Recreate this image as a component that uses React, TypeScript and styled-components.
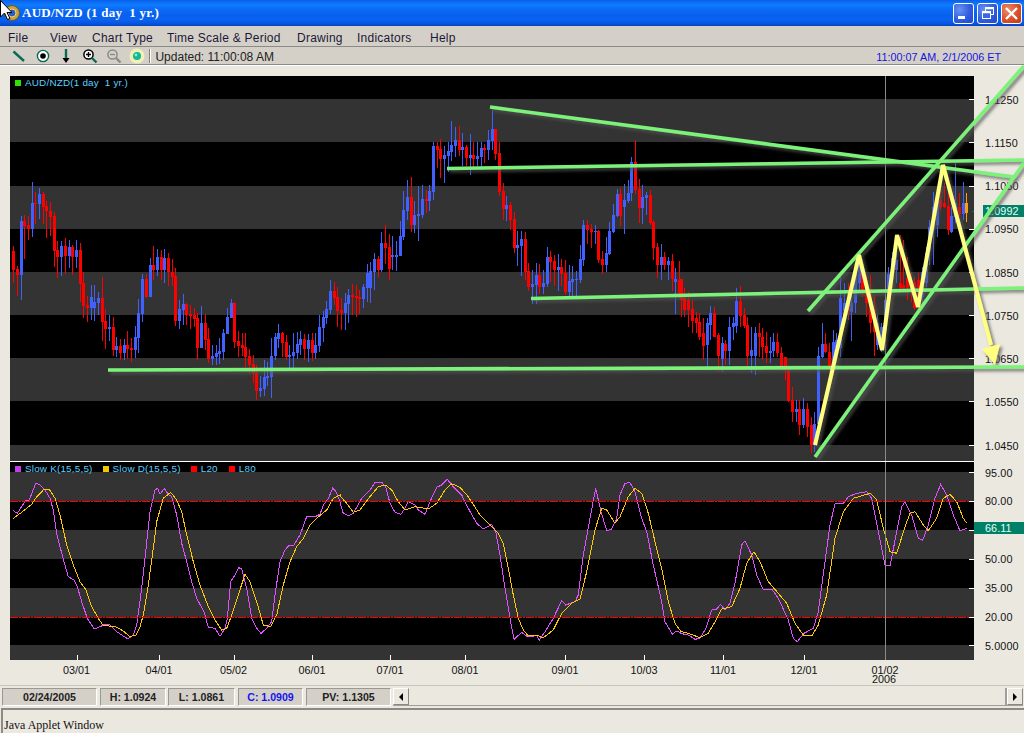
import React from 'react';
import styled, { createGlobalStyle } from 'styled-components';

const Global = createGlobalStyle`
  html, body { margin: 0; padding: 0; background: #fff; }
  #root { width: 1024px; }
`;

const Win = styled.div`
  position: relative;
  width: 1024px; height: 733px; overflow: hidden;
  display: flex; flex-direction: column;
  background: #ebe8e0;
  font-family: "Liberation Sans", Arial, sans-serif;
`;
const TitleBar = styled.div`
  height: 26px; flex: none; display: flex; align-items: center;
  padding: 0 2px 0 3px; box-sizing: border-box;
  background: linear-gradient(#0a5ee6 0, #0c6cf4 2px, #0f7cff 5px, #0a6cf6 9px, #0860ee 15px, #0a62f0 20px, #0652dc 24px, #0344c0 26px);
`;
const TitleText = styled.span`
  font: bold 13px "Liberation Serif", serif; color: #fff; margin-left: 1px;
  white-space: pre; letter-spacing: .25px;
`;
const WinButtons = styled.div`margin-left: auto; display: flex; gap: 3px;`;
const WinButton = styled.div<{ $close?: boolean }>`
  width: 21px; height: 21px; box-sizing: border-box; border: 1px solid #fff; border-radius: 3px;
  display: flex; align-items: center; justify-content: center;
  background: ${p => p.$close
    ? 'radial-gradient(circle at 30% 30%, #ee8a6a, #d8502a 55%, #c03a16)'
    : 'radial-gradient(circle at 30% 30%, #6a92f0, #2f5ce0 55%, #2048c8)'};
`;
const Cursor = styled.svg`position: absolute; left: 0; top: 0; width: 12px; height: 20px;`;
const MenuBar = styled.div`
  height: 21px; flex: none; box-sizing: border-box; display: flex; align-items: center;
  padding: 3px 0 0 8px; background: #d4d0c8; border-bottom: 1px solid #8a8a88;
`;
const MenuItem = styled.span<{ $w: number }>`
  width: ${p => p.$w}px; font-size: 12px; letter-spacing: .25px; color: #1c1838; white-space: nowrap;
`;
const ToolBar = styled.div`
  height: 18px; flex: none; box-sizing: border-box; display: flex; align-items: center;
  padding: 0 23px 0 11px; background: #d4d0c8; border-bottom: 1px solid #8a8a88;
`;
const Tools = styled.div`display: flex; gap: 7.7px; align-items: center;`;
const Separator = styled.div`
  width: 1px; height: 14px; margin: 0 4px 0 4px; background: #808080; border-right: 1px solid #fff;
`;
const Updated = styled.span`font-size: 12px; color: #222; padding-top: 2px;`;
const Clock = styled.span`margin-left: auto; font-size: 10.8px; color: #1414e0; padding-top: 2px;`;
const ChartRegion = styled.div`
  position: relative; flex: none; height: 620px; overflow: hidden; box-sizing: border-box;
  padding: 11px 0 0 10px; box-shadow: inset 0 1px #fff;
  display: grid; grid-template-columns: 964px 50px; grid-template-rows: 385px 1px 198px;
`;
const PlotSvg = styled.svg`display: block; background: #000; shape-rendering: crispEdges;`;
const Divider = styled.div`background: #fff; grid-column: 1;`;
const Overlay = styled.svg`position: absolute; left: 0; top: 0; pointer-events: none;`;
const XAxis = styled.svg`position: absolute; left: 0; bottom: 0; font: 10.8px "Liberation Sans", sans-serif; fill: #111;`;
const AxisCol = styled.div<{ $rowH: number; $pad: number }>`
  position: relative; display: flex; flex-direction: column; padding-top: ${p => p.$pad}px;
  & > span { height: ${p => p.$rowH}px; flex: none; display: flex; align-items: center; padding-left: 11px;
    font-size: 10.8px; letter-spacing: .1px; color: #111; line-height: 1; }
`;
const Sticker = styled.div<{ $top: number; $left: number }>`
  position: absolute; left: ${p => p.$left}px; right: 0; top: ${p => p.$top}px; height: 12px; background: #008066;
  color: #e6fff6; font-size: 10.8px; line-height: 12px; padding-left: ${p => 11 - p.$left}px; letter-spacing: .1px;
`;
const Legend = styled.div<{ $top: number }>`
  position: absolute; left: 15px; top: ${p => p.$top}px; display: flex; align-items: center; height: 9px;
  font-size: 9.9px; letter-spacing: .2px; color: #5ccfff; white-space: pre;
`;
const Swatch = styled.i<{ $c: string; $ml?: number }>`
  display: block; width: 6px; height: 6px; background: ${p => p.$c}; margin: 0 4px 0 ${p => p.$ml ?? 0}px;
`;
const StatusBar = styled.div`
  height: 22px; flex: none; box-sizing: border-box; border-top: 1px solid #c8c5bd;
  padding: 2px 1px 0 2px; display: flex; align-items: flex-start; background: #ebe8e0;
`;
const StatusBox = styled.div<{ $w: number; $ml?: number; $blue?: boolean }>`
  width: ${p => p.$w}px; margin-left: ${p => p.$ml ?? 0}px; height: 18px; box-sizing: border-box;
  background: #d4d0c8; border: 1px solid; border-color: #9a9890 #fff #fff #9a9890;
  display: flex; align-items: center; justify-content: center;
  font-size: 10.6px; font-weight: bold; color: ${p => p.$blue ? '#1414f0' : '#222'};
`;
const Scroll = styled.div`
  margin-left: 2px; flex: 1; height: 18px; display: flex; background: #ebe8e0;
  border-bottom: 1px solid #a09e96; box-sizing: border-box;
`;
const ScrollBtn = styled.div`
  width: 16px; height: 17px; box-sizing: border-box; background: #ebe8e0;
  border: 1px solid; border-color: #fff #8a8880 #8a8880 #fff;
  display: flex; align-items: center; justify-content: center;
`;
const ScrollTrack = styled.div`flex: 1; border-right: 2px solid #a09e96; box-sizing: border-box;`;
const Arrow = styled.i<{ $right?: boolean }>`
  display: block; width: 0; height: 0; border-style: solid;
  border-width: 4px ${p => p.$right ? 0 : '4px'} 4px ${p => p.$right ? '4px' : 0};
  border-color: transparent #000;
`;
const Footer = styled.div`
  flex: 1; margin-top: 1px; box-sizing: border-box; border-top: 2px solid #8c8a84; border-left: 2px solid #8c8a84;
  margin-left: 1px; padding: 8px 0 0 1px;
  font: 12px "Liberation Serif", serif; color: #111;
`;

const parse = (base: number, x0: number, x1: number, s: string) => {
  const rows = s.trim().split(/\s+/);
  return rows.map((r, i) => {
    const [a, b, c, d] = r.slice(1).split(',').map(n => base + Number(n) / 3);
    return { k: r[0], x: Math.round(x0 + (i * (x1 - x0)) / (rows.length - 1)), a, b, c, d };
  });
};

const candles = [
  ...parse(170, 13.3, 337.3, `R243,300,228,339 R297,315,288,378 B153,315,138,390 R153,168,135,267 R165,177,138,210 B99,177,36,201 R99,101,66,162 B72,102,54,147 R72,111,66,162 R108,123,93,204 R123,141,96,198 R138,243,126,291 R240,261,213,324 B228,261,213,318 R228,258,204,312 B231,258,210,294 R231,261,225,315 B240,261,210,294 R240,342,219,396 R339,408,306,444 R405,414,378,456 B381,414,345,450 B396,414,345,453 B384,399,366,435 R384,456,321,513 R453,477,417,537 B471,477,435,513 R471,540,441,558 B528,540,501,561 R528,549,507,570 B525,549,507,570 R525,537,483,567 R534,540,504,576 B501,540,468,564 B429,504,387,550 B327,432,312,456 R327,381,312,384 B285,381,264,381 R285,300,228,330 B261,300,237,318 R261,300,240,330 B264,300,237,339 R264,306,249,348 R306,321,267,348 R318,453,294,468 B417,453,390,477 B402,420,372,465 R402,435,399,465 R432,438,405,477 R435,447,414,471 R444,534,429,570 B459,534,408,534 R459,510,432,540 R507,567,474,579 B558,567,525,585 B549,561,525,585 B543,552,504,582 B489,546,477,570 B441,492,414,492 B399,444,387,444 R399,516,396,534 R513,528,483,561 R525,534,489,558 R531,561,489,590 R558,585,537,612 R582,609,555,639 R606,663,585,690 B654,663,618,681 B621,657,570,678 B618,624,576,648 B558,621,504,684 B501,558,489,570 B489,507,462,534 R489,519,486,561 R516,561,495,570 B555,561,525,600 B546,558,489,594 B522,549,486,567 B507,525,483,555 R507,537,492,570 B510,537,492,576 R510,549,489,573 B525,549,489,567 B471,528,435,546 B441,474,423,516 B417,444,393,462 B363,420,330,432 R363,384,336,405 R381,423,351,470`),
  ...parse(90, 341, 679, `R660,668,625,720 B640,668,610,720 B615,642,598,700 R615,622,582,675 R618,624,585,680 R622,628,600,672 B592,628,583,655 B548,595,522,635 B543,594,515,640 B507,546,490,600 R507,541,498,560 B460,541,426,545 R460,474,405,522 R472,537,432,570 B496,502,438,540 B496,500,452,542 B438,498,392,498 B360,442,303,450 B321,364,270,390 R321,405,262,426 B375,405,333,428 B372,378,288,452 B327,375,285,385 R327,333,300,370 B303,333,285,362 B167,306,155,330 R167,181,155,234 R178,207,148,264 B195,207,168,278 B183,198,155,246 B165,186,94,212 B150,168,111,200 R150,180,108,198 B171,180,129,228 R171,204,165,228 B195,204,132,255 R195,207,156,240 B198,207,156,228 B174,201,156,240 R174,180,162,219 B150,180,120,210 B117,153,60,180 R117,192,117,210 R189,306,156,317 R303,357,279,390 B345,357,318,392 R345,390,336,420 R387,474,366,490 B465,474,423,528 B447,468,423,558 R447,546,426,570 R543,591,519,603 B582,591,540,642 B555,585,519,642 R555,591,522,612 B579,591,540,612 B501,582,471,590 R501,516,483,576 R513,540,495,588 B531,540,492,603 R531,552,507,588 R549,606,510,615 B573,606,525,620 B567,576,528,618 B567,570,543,618 B507,570,465,580 B405,510,390,528 R405,420,390,462 R417,426,402,474 B423,426,405,462 R423,510,420,520 R507,525,483,552 B489,525,441,546 B423,492,396,495 B375,426,342,430 B312,378,297,380 R312,378,294,408 B330,351,282,432 B309,333,270,340 B216,309,201,333 R216,300,150,312 R297,354,267,400 B321,354,285,402 B315,324,306,375 R315,399,300,405 R396,474,390,510 R471,525,459,564 B501,525,462,570 R501,525,486,540 B513,525,501,570 R513,567,492,603 B567,576,534,672 R570,610,513,625`),
  ...parse(70, 680.7, 966.3, `R628,690,628,740 R680,720,655,740 R690,720,665,770 R718,752,690,790 R745,760,725,790 R755,800,730,810 R790,828,745,870 B760,825,745,890 B730,765,708,810 R730,800,710,800 R795,857,790,905 B820,867,800,905 R822,843,810,885 B770,843,740,885 B758,772,740,810 B692,768,655,790 R692,738,648,770 R735,768,715,775 R765,857,740,890 B840,857,770,910 B788,857,770,915 R788,802,760,860 R800,830,775,870 R828,850,785,880 B842,850,800,880 B815,842,790,860 R815,850,790,860 R850,890,830,900 R860,900,860,930 R900,992,890,995 R990,1025,950,1055 B1018,1026,990,1055 R1018,1065,990,1095 B1018,1065,985,1075 R1018,1072,1000,1100 R1066,1125,1040,1150 B1062,1125,1025,1145 B858,1062,830,1070 B822,860,760,865 R822,845,790,850 R845,890,820,900 B815,885,780,860 B810,835,790,812 B685,835,610,860 B700,722,640,760 R685,722,640,750 B700,725,640,812 B610,700,590,730 B560,640,540,660 R610,660,600,680 R630,700,615,740 R660,760,615,790 R720,785,675,858 B760,825,735,840 B770,840,760,845 B690,780,660,790 B612,690,590,700 B565,600,545,640 B570,600,540,640 R640,655,495,660 R645,655,510,660 R625,655,560,690 R632,655,605,695 R635,715,620,720 R630,700,610,715 B605,680,590,700 B550,640,530,650 B470,545,450,585 B410,480,365,585 B395,465,385,500 R390,410,340,420 R400,410,340,415 R407,480,345,495 B437,485,410,490 B400,440,280,460 R412,432,370,440 B398,432,335,450 O398,428,370,455`),
];

const colors: Record<string, string> = { R: '#ff0000', B: '#4060ff', O: '#ffa000' };

const line = (base: number, xo: number, s: string) =>
  s.trim().split(/\s+/).map(p => {
    const [x, y] = p.split(',').map(Number);
    return `${(xo + x / 3).toFixed(1)},${(base + y / 3).toFixed(1)}`;
  }).join(' ');

const K = [
  line(455, 0, `40,167 52,175 68,150 78,137 88,135 107,85 118,88 135,105 150,130 160,165 170,235 180,275 192,320 205,365 222,375 232,395 245,440 262,490 283,522 300,515 315,508 330,510 350,530 370,543 384,552 400,540 410,510 425,400 437,290 450,170 465,105 473,100 480,118 493,100 505,118 515,125 530,180 545,265 560,320 575,380 590,430 612,470 625,517 645,520 660,544 675,520 682,490 692,380 705,360 716,338 725,342 740,400 755,490 770,520 783,535 800,520 815,500 825,420 840,320 855,285 868,270 882,270 900,240 920,185 945,185 960,178 970,150 985,130 998,100 1008,110 1020,140`),
  line(455, 340, `0,145 10,175 25,182 40,175 65,130 90,105 105,82 125,82 137,95 150,145 165,172 183,178 195,160 205,140 225,150 235,165 255,178 270,140 290,97 305,90 322,73 340,95 365,120 385,160 410,205 430,222 455,208 467,230 480,300 495,400 510,490 522,553 545,532 562,545 590,542 598,555 615,530 640,490 665,437 677,450 705,440 715,420 730,300 750,190 767,100 783,170 800,227 815,222 830,190 840,120 855,85 870,83 885,110 905,190 920,230 940,330 965,440 975,500 997,538 1008,528 1020,532`),
  line(455, 680, `0,535 25,540 45,553 60,550 78,520 95,465 110,462 122,448 135,465 150,445 165,385 185,270 195,257 215,300 230,360 250,405 275,402 295,430 325,495 340,550 352,560 372,535 400,520 415,470 435,320 450,210 465,147 490,145 505,125 530,115 560,110 575,130 595,230 615,330 630,333 650,230 665,155 675,140 695,180 715,250 728,256 745,210 765,130 782,88 800,120 820,180 840,227 860,220`),
].join(' ');
const D = [
  line(455, 0, `40,190 65,172 95,148 110,125 130,105 148,103 165,130 180,180 200,270 220,330 240,380 258,405 275,455 295,490 310,512 345,514 370,528 390,545 408,540 420,515 430,480 445,390 460,280 470,200 490,130 512,112 530,135 545,170 560,240 580,320 600,390 625,455 645,495 665,525 680,520 695,480 715,420 735,358 750,380 770,440 790,510 812,515 830,480 850,390 870,320 890,275 910,250 930,210 950,190 980,165 1000,130 1020,120`),
  line(455, 340, `0,123 20,145 40,172 60,165 90,125 115,95 137,90 155,105 175,140 195,165 225,155 265,162 290,145 315,105 335,86 360,97 385,125 420,180 450,210 475,235 490,265 505,340 520,420 535,490 550,525 565,543 590,541 610,548 640,525 665,475 695,445 720,432 740,350 765,225 785,160 800,165 825,205 840,185 865,125 885,100 905,115 925,175 945,260 965,340 985,440 1005,505 1020,525`),
  line(455, 680, `0,528 30,537 60,548 85,535 105,500 125,462 155,455 180,400 200,325 222,290 240,320 265,380 295,415 320,445 345,505 370,540 395,543 415,510 440,420 465,250 490,170 520,130 570,115 590,135 610,220 630,290 650,295 675,215 690,175 705,170 730,210 745,227 770,190 790,130 810,118 830,140 850,190 860,205`),
].join(' ');

const priceBands = [[99, 142], [186, 229], [272, 315], [358, 401], [445, 461]];
const priceTicks = [99, 142, 186, 229, 272, 315, 358, 401, 445];
const stochBands = [[472, 501], [530, 559], [588, 617], [645, 660]];
const stochTicks = [472, 501, 530, 559, 588, 617, 645];
const xTicks: [number, string][] = [[76.5, '03/01'], [159, '04/01'], [233.5, '05/02'], [312, '06/01'], [390, '07/01'], [465, '08/01'], [565, '09/01'], [644, '10/03'], [723, '11/01'], [804, '12/01'], [885, '01/02']];
const dashStarts = Array.from({ length: 81 }, (_, i) => 10 + i * 12);

const greens = [
  [490, 107, 1014, 177], [447, 168.5, 1024, 160], [531, 298.5, 1024, 288], [108, 370, 1024, 367],
  [808, 311, 1024, 66], [815, 457, 1024, 163],
];

const Bands = ({ b, x0 = 10 }: { b: number[][]; x0?: number }) => (
  <>{b.map(([a, c]) => <rect key={a} x={x0} y={a} width={964} height={c - a} fill="#333" />)}</>
);
const Ticks = ({ t, w = '#fff' }: { t: number[]; w?: string }) => (
  <>{t.map(y => <rect key={y} x={969} y={y} width={5} height={1} fill={w} />)}</>
);
const DashLine = ({ y }: { y: number }) => (
  <g fill="#ff0000">
    {dashStarts.map(x => (
      <React.Fragment key={x}>
        <rect x={x} y={y} width={8} height={1} />
        <rect x={x + 9} y={y} width={2} height={1} />
      </React.Fragment>
    ))}
  </g>
);

export default function App() {
  return (
    <Win>
      <Global />
      <TitleBar>
        <svg width="18" height="18" viewBox="0 0 18 18">
          <circle cx="9" cy="9" r="7.5" fill="#c9a23c" stroke="#6a5a20" />
          <circle cx="9" cy="9" r="4" fill="#2a5ccc" stroke="#f0d880" />
        </svg>
        <TitleText>AUD/NZD (1 day  1 yr.)</TitleText>
        <WinButtons>
          <WinButton>
            <svg width="13" height="13" viewBox="0 0 13 13"><rect x="1" y="9" width="7" height="3" fill="#fff" /></svg>
          </WinButton>
          <WinButton>
            <svg width="14" height="14" viewBox="0 0 14 14" fill="none" stroke="#fff">
              <rect x="4.5" y="1.5" width="8" height="7" strokeWidth="1" />
              <path d="M4.5 2.5h8" strokeWidth="1.5" />
              <rect x="1.5" y="5.5" width="8" height="7" fill="#3a66e0" strokeWidth="1" />
              <path d="M1.5 6.5h8" strokeWidth="1.5" />
            </svg>
          </WinButton>
          <WinButton $close>
            <svg width="15" height="15" viewBox="0 0 15 15"><path d="M2 2L13 13M13 2L2 13" stroke="#fff" strokeWidth="2.4" /></svg>
          </WinButton>
        </WinButtons>
      </TitleBar>
      <Cursor viewBox="0 0 12 20">
        <path d="M0.5 0.5V17L4.5 13L7.5 19.5L10 18.5L7 12.5H12L0.5 0.5Z" fill="#fff" stroke="#000" strokeWidth="1" />
      </Cursor>
      <MenuBar>
        <MenuItem $w={42}>File</MenuItem>
        <MenuItem $w={42}>View</MenuItem>
        <MenuItem $w={75}>Chart Type</MenuItem>
        <MenuItem $w={130}>Time Scale &amp; Period</MenuItem>
        <MenuItem $w={60}>Drawing</MenuItem>
        <MenuItem $w={73}>Indicators</MenuItem>
        <MenuItem $w={30}>Help</MenuItem>
      </MenuBar>
      <ToolBar>
        <Tools>
          <svg width="16" height="16" viewBox="0 0 16 16"><path d="M2.5 3.5L13 13" stroke="#0a6a55" strokeWidth="2.4" /></svg>
          <svg width="16" height="16" viewBox="0 0 16 16">
            <circle cx="8" cy="8" r="5.6" fill="#fff" stroke="#0a6a55" strokeWidth="1.4" />
            <circle cx="8" cy="8" r="2.8" fill="#000" />
          </svg>
          <svg width="16" height="16" viewBox="0 0 16 16">
            <path d="M8 1V10" stroke="#0a6a55" strokeWidth="2.4" />
            <path d="M4.5 10H11.5L8 15Z" fill="#000" />
          </svg>
          <svg width="16" height="16" viewBox="0 0 16 16">
            <circle cx="6.5" cy="6.5" r="4.6" fill="#fff" stroke="#000" strokeWidth="1.5" />
            <path d="M4 6.5H9M6.5 4V9" stroke="#000" strokeWidth="1.4" />
            <path d="M10 10L14.5 14.5" stroke="#0a6a55" strokeWidth="2.4" />
          </svg>
          <svg width="16" height="16" viewBox="0 0 16 16">
            <circle cx="6.5" cy="6.5" r="4.6" fill="#d4d0c8" stroke="#8a8a88" strokeWidth="1.5" />
            <path d="M4 6.5H9" stroke="#8a8a88" strokeWidth="1.4" />
            <path d="M10 10L14.5 14.5" stroke="#8a8a88" strokeWidth="2.4" />
          </svg>
          <svg width="16" height="16" viewBox="0 0 16 16">
            <circle cx="8" cy="8" r="7.5" fill="#f2f0b4" />
            <circle cx="8" cy="8" r="4" fill="#12b896" />
            <circle cx="7" cy="7" r="1.4" fill="#7ff0d8" />
          </svg>
        </Tools>
        <Separator />
        <Updated>Updated: 11:00:08 AM</Updated>
        <Clock>11:00:07 AM, 2/1/2006 ET</Clock>
      </ToolBar>
      <ChartRegion>
        <PlotSvg width={964} height={385} viewBox="10 76 964 385">
          <Bands b={priceBands} />
          {candles.map((c, i) => (
            <g key={i} fill={colors[c.k]}>
              <rect x={c.x} y={c.c} width={1} height={Math.max(1, c.d - c.c)} />
              <rect x={c.x - 1} y={c.a} width={3} height={Math.max(1, c.b - c.a)} />
            </g>
          ))}
          <rect x={885} y={76} width={1} height={385} fill="#8a8a8a" />
          <Ticks t={priceTicks} />
          <rect x={972} y={211} width={2} height={1} fill="#008066" />
        </PlotSvg>
        <AxisCol $rowH={43.25} $pad={2.4}>
          {['1.1250', '1.1150', '1.1050', '1.0950', '1.0850', '1.0750', '1.0650', '1.0550', '1.0450'].map(t => <span key={t}>{t}</span>)}
          <Sticker $top={129} $left={9}>1.0992</Sticker>
        </AxisCol>
        <Divider />
        <div />
        <PlotSvg width={964} height={198} viewBox="10 462 964 198">
          <Bands b={stochBands} />
          <polyline points={K} fill="none" stroke="#e050ff" strokeWidth="1" />
          <polyline points={D} fill="none" stroke="#ffc800" strokeWidth="1" />
          <DashLine y={501} />
          <DashLine y={617} />
          <rect x={885} y={462} width={1} height={198} fill="#8a8a8a" />
          <Ticks t={stochTicks} />
          {xTicks.slice(0, 10).map(([x]) => <rect key={x} x={Math.round(x)} y={655} width={1} height={5} fill="#fff" />)}
        </PlotSvg>
        <AxisCol $rowH={28.9} $pad={0}>
          {['95.00', '80.00', '', '50.00', '35.00', '20.00', '5.0000'].map((t, i) => (
            <span key={i} style={i === 0 ? { marginTop: -3.5 } : undefined}>{t}</span>
          ))}
          <Sticker $top={60} $left={0}>66.11</Sticker>
        </AxisCol>
        <XAxis width={1024} height={25} viewBox="0 660 1024 25">
          {xTicks.map(([x, t]) => <text key={t} x={x} y={673.5} textAnchor="middle">{t}</text>)}
          <text x={884} y={682.5} textAnchor="middle">2006</text>
        </XAxis>
        <Overlay width={1024} height={620} viewBox="0 65 1024 620">
          <defs>
            <filter id="sh" x="0" y="0" width="1100" height="800" filterUnits="userSpaceOnUse">
              <feDropShadow dx="2.5" dy="2.5" stdDeviation="1.5" floodColor="#555" floodOpacity="0.75" />
            </filter>
          </defs>
          <g filter="url(#sh)">
            {greens.map(([a, b, c, d], i) => <line key={i} x1={a} y1={b} x2={c} y2={d} stroke="#7df27a" strokeWidth="3.6" />)}
            <polyline points="815,445 859,255 882,350 897,235 918,307 943,165 991,345" fill="none" stroke="#ffff80" strokeWidth="4" strokeLinejoin="miter" />
            <path d="M982 349L1000 344L995 365Z" fill="#ffff80" />
          </g>
        </Overlay>
        <Legend $top={13}>
          <Swatch $c="#2fe000" />AUD/NZD(1 day  1 yr.)
        </Legend>
        <Legend $top={399}>
          <Swatch $c="#c040e8" />Slow K(15,5,5)
          <Swatch $c="#f0c800" $ml={10} />Slow D(15,5,5)
          <Swatch $c="#ff0000" $ml={10} />L20
          <Swatch $c="#ff0000" $ml={11} />L80
        </Legend>
      </ChartRegion>
      <StatusBar>
        <StatusBox $w={95}>02/24/2005</StatusBox>
        <StatusBox $w={66} $ml={3}>H: 1.0924</StatusBox>
        <StatusBox $w={67} $ml={2}>L: 1.0861</StatusBox>
        <StatusBox $w={65} $ml={3} $blue>C: 1.0909</StatusBox>
        <StatusBox $w={85} $ml={3}>PV: 1.1305</StatusBox>
        <Scroll>
          <ScrollBtn><Arrow /></ScrollBtn>
          <ScrollTrack />
          <ScrollBtn><Arrow $right /></ScrollBtn>
        </Scroll>
      </StatusBar>
      <Footer>Java Applet Window</Footer>
    </Win>
  );
}
